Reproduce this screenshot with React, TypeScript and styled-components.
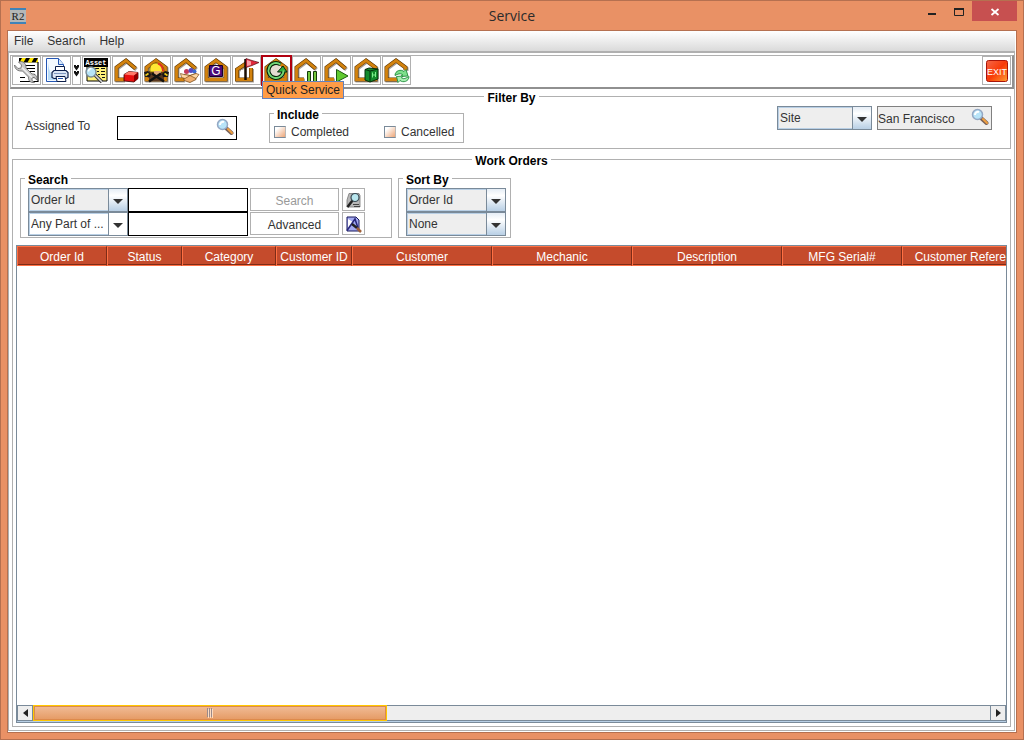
import React, { useId } from "react";
import styled, { createGlobalStyle, css } from "styled-components";

const color = {
  chrome: "#e99165",
  chromeEdge: "#b57050",
  line: "#b0b0b0",
  steel: "#7a8a99",
  ice: "#b8cfe5",
  text: "#333333",
  header: "#c54b2c",
  headerLight: "#ff7043",
  headerDark: "#7d2c18",
};

const GlobalStyle = createGlobalStyle`
  *, *::before, *::after { box-sizing: border-box; }
  body {
    margin: 0;
    font: 12px/14px "Liberation Sans", Arial, sans-serif;
    color: ${color.text};
  }
  button, input, select { font: inherit; color: inherit; margin: 0; border-radius: 0; }
  svg { display: block; }
`;

/* ---------- window frame ---------- */

const Window = styled.div`
  display: flex;
  flex-direction: column;
  min-height: 100vh;
  padding: 0 6px 6px;
  background: ${color.chrome};
  border: 1px solid ${color.chromeEdge};
`;

const TitleBar = styled.header`
  display: grid;
  grid-template-columns: 1fr auto 1fr;
  align-items: center;
  height: 29px;

  > svg { margin-left: 3px; }
`;

const Title = styled.h1`
  margin: 0;
  font: 400 14px/20px "Open Sans", sans-serif;
  color: #2b2b2b;
`;

const WindowButtons = styled.div`
  display: flex;
  justify-content: flex-end;
  align-self: start;
`;

const WindowButton = styled.button<{ $close?: boolean }>`
  display: grid;
  place-items: center;
  width: ${(p) => (p.$close ? 45 : 27)}px;
  height: 20px;
  padding: 2px 0 0;
  border: 0;
  background: ${(p) => (p.$close ? "#c75050" : "transparent")};
`;

const Frame = styled.div`
  display: flex;
  flex-direction: column;
  flex: 1;
  border: 1px solid ${color.chromeEdge};
  background: #fff;
  padding: 0 1px 1px 0;
`;

const MenuBar = styled.nav`
  display: flex;
  gap: 14px;
  height: 20px;
  padding: 0 6px;
  align-items: center;
  background: linear-gradient(#ffffff, #dadada);
`;

const MenuItem = styled.button`
  padding: 0;
  border: 0;
  background: none;
`;

const Panel = styled.main`
  display: flex;
  flex-direction: column;
  flex: 1;
  border: 1px solid ${color.line};
  border-top-width: 2px;
`;

/* ---------- toolbar ---------- */

const ToolBar = styled.div`
  display: flex;
  gap: 1px;
  margin: 2px 0 0 1px;
  padding: 0 1px 2px;
  border: 1px solid ${color.line};
  border-right: 2px solid #909090;
  border-bottom: 2px solid #909090;
`;

const ToolSlot = styled.div<{ $end?: boolean }>`
  position: relative;
  ${(p) => p.$end && css`margin-left: auto;`}
`;

const ToolButton = styled.button<{ $narrow?: boolean; $hot?: boolean }>`
  display: grid;
  place-items: center;
  width: ${(p) => (p.$narrow ? 9 : 29)}px;
  height: 29px;
  padding: 0;
  overflow: hidden;
  background: #fff;
  border: 1px solid ${color.line};
  ${(p) =>
    p.$hot &&
    css`
      border-color: #b00010;
      outline: 1px solid #b00010;
    `}
`;

const Tooltip = styled.div`
  position: absolute;
  z-index: 1;
  left: 0;
  top: 25px;
  padding: 1px 3px;
  white-space: nowrap;
  color: #222;
  background: #ff9c46;
  border: 1px solid #6382bf;
`;

/* ---------- group boxes ---------- */

const GroupFrame = styled.section<{ $width?: number; $fill?: boolean }>`
  display: flex;
  flex-direction: column;
  min-width: 0;
  border: 1px solid ${color.line};
  ${(p) => p.$width && css`width: ${p.$width}px;`}
  ${(p) => p.$fill && css`flex: 1;`}
`;

const GroupTitle = styled.h2<{ $center?: boolean }>`
  align-self: ${(p) => (p.$center ? "center" : "flex-start")};
  margin: -6px 4px 0;
  padding: 0 3px;
  font-size: 12px;
  line-height: 14px;
  font-weight: bold;
  color: #000;
  background: #fff;
`;

const Sections = styled.div`
  display: flex;
  flex-direction: column;
  flex: 1;
  gap: 10px;
  padding: 7px 3px 3px;
`;

const FilterRow = styled.div`
  display: flex;
  align-items: flex-start;
  height: 43px;
  padding: 0 18px 0 12px;
`;

const FilterField = styled.div`
  display: flex;
  align-items: center;
  padding-top: 11px;
  margin-right: 32px;
`;

const IncludeFilter = styled.div`
  padding-top: 8px;
`;

const FieldLabel = styled.label`
  width: 92px;
  padding-bottom: 4px;
`;

const SiteFilter = styled.div`
  display: flex;
  gap: 5px;
  margin-left: auto;
  padding-top: 1px;
`;

const LookupBox = styled.div<{ $filled?: boolean; $width: number }>`
  display: flex;
  width: ${(p) => p.$width}px;
  height: 24px;
  border: 1px solid ${(p) => (p.$filled ? "#808080" : "#000")};
  background: ${(p) => (p.$filled ? "#eeeeee" : "#fff")};
`;

const LookupInput = styled.input`
  flex: 1;
  min-width: 0;
  padding: 1px 0 0;
  border: 0;
  outline: 0;
  background: transparent;
`;

const LookupButton = styled.button`
  width: 20px;
  padding: 0 0 3px;
  border: 0;
  background: none;
`;

const Checks = styled.div`
  display: grid;
  grid-template-columns: 110px auto;
  align-items: center;
  height: 20px;
  padding-left: 4px;
`;

const CheckLabel = styled.label`
  display: flex;
  align-items: center;
  gap: 5px;
`;

const CheckBox = styled.input`
  appearance: none;
  width: 12px;
  height: 12px;
  border: 1px solid ${color.steel};
  border-right-color: #b9b9b9;
  background: linear-gradient(135deg, #ffffff 20%, #eda577);
`;

const Groups = styled.div`
  display: flex;
  gap: 6px;
  padding: 10px 7px 7px;
`;

const SearchGrid = styled.div`
  display: grid;
  grid-template-columns: 100px 122px 92px 23px;
  grid-auto-rows: 24px;
  padding: 1px 7px;
`;

const SortStack = styled.div`
  display: grid;
  grid-auto-rows: 24px;
  padding: 1px 7px;
`;

const SearchInput = styled.input`
  width: 120px;
  height: 24px;
  padding: 0 3px;
  border: 1px solid #000;
  background: #fff;
`;

const PushButton = styled.button<{ $icon?: boolean }>`
  display: grid;
  place-items: center;
  width: ${(p) => (p.$icon ? 23 : 89)}px;
  height: 23px;
  padding: 2px 0 0;
  background: #fff;
  border: 1px solid ${color.line};
  &:disabled { color: #999; }
`;

/* ---------- drop-down ---------- */

const ComboBox = styled.div<{ $plain?: boolean; $width: number }>`
  display: grid;
  grid-template-columns: 1fr 19px;
  width: ${(p) => p.$width}px;
  height: 24px;
  border: 1px solid ${color.steel};
  background: ${(p) => (p.$plain ? "#fff" : "#eeeeee")};
  box-shadow: inset 0 0 0 1px ${color.ice};
`;

const ComboSelect = styled.select`
  grid-area: 1 / 1 / 2 / 3;
  min-width: 0;
  padding: 0 20px 1px 2px;
  border: 0;
  appearance: none;
  background: transparent;
`;

const ComboArrow = styled.span<{ $plain?: boolean }>`
  grid-area: 1 / 2 / 2 / 3;
  display: grid;
  place-items: center;
  padding-top: 2px;
  pointer-events: none;
  border-left: 1px solid ${color.steel};
  background: ${(p) =>
    p.$plain ? "#fff" : `linear-gradient(#e6eef6, #ffffff 30%, ${color.ice})`};
`;

/* ---------- table ---------- */

const ScrollPane = styled.div`
  display: flex;
  flex-direction: column;
  flex: 1;
  margin: 0 3px 3px;
  border: 1px solid ${color.steel};
`;

const Viewport = styled.div`
  flex: 1;
  overflow: hidden;
  width: 0;
  min-width: 100%;
`;

const Table = styled.table`
  width: 1021px;
  table-layout: fixed;
  border-collapse: separate;
  border-spacing: 0;
`;

const HeaderCell = styled.th<{ $width: number }>`
  width: ${(p) => p.$width}px;
  height: 20px;
  padding: 2px 0 0;
  font-weight: normal;
  white-space: nowrap;
  color: #fff;
  background: ${color.header};
  border: 1px solid ${color.headerLight};
  border-right-color: ${color.headerDark};
  box-shadow: inset 0 -1px 0 ${color.headerDark};
`;

const ScrollBar = styled.div`
  display: flex;
  height: 17px;
  border-bottom: 1px solid ${color.ice};
`;

const ScrollArrow = styled.button`
  display: grid;
  place-items: center;
  width: 16px;
  padding: 0;
  background: #eeeeee;
  border: 1px solid ${color.steel};
`;

const ScrollTrack = styled.div`
  flex: 1;
  background: #eeeeee;
  border: 1px solid ${color.steel};
  border-width: 1px 0;
`;

const ScrollThumb = styled.div`
  display: grid;
  place-items: center;
  width: 37%;
  height: 16px;
  margin: -1px 0;
  border: 1px solid #ffc800;
  background: linear-gradient(#f1bd98, #e59a63);
  box-shadow: inset 0 0 0 1px #dd8a4c;
`;

/* ---------- icons ---------- */

const Icon = ({ children, size = 27, height }: { children: React.ReactNode; size?: number; height?: number }) => (
  <svg width={size} height={height ?? size} viewBox={`0 0 ${size} ${height ?? size}`} aria-hidden="true">
    {children}
  </svg>
);

const OPEN_HOUSE = "M22.5 11.500L13 3.500L3.500 10.500V22.500H11";
const FULL_HOUSE = "M13 3.500L3.500 10.500V22.500H22.500V10.500Z";

const House = ({ d = OPEN_HOUSE }: { d?: string }) => (
  <>
    <path d={d} transform="translate(1 1)" fill="none" stroke="#a8a098" strokeWidth="4" />
    <path d={d} fill="none" stroke="#5c3400" strokeWidth="4" />
    <path d={d} fill="none" stroke="#d2820e" strokeWidth="2.800" />
  </>
);

const WorkOrderIcon = () => (
  <Icon>
    <path d="M6 5h19v19H6z" fill="#fff" />
    <path d="M6 1h19v4.500H6z" fill="#000" />
    <path d="M9 1h4l-2.500 4.500H6.500zM17 1h4l-2.500 4.500h-4zM25 1v4.500h-2.500z" fill="#ffe600" />
    <path d="M25 5v19.500H7M9 8.500h13M12 11.500h10M13 14.500h9M16 17.500h6M7 20.500h5M20 20.500h2" fill="none" stroke="#000" strokeWidth="1.200" />
    <path d="M1.500 8l3.500 3.500 3-.5.5-3L5.500 5c4-1.500 8 1 7.500 6l6 6c3-.5 5.500 2 5 6l-3-2.500-2 .5v2.500l2.500 2c-4 .5-6.500-2-6-5.500l-6-6c-4.500.5-8-2-8-6z" fill="#c6c6c6" stroke="#666" strokeWidth=".8" />
    <path d="M9 10.500l10 10" stroke="#eeeeee" strokeWidth="1.500" />
  </Icon>
);

const PrintIcon = () => (
  <Icon>
    <path d="M3.500 1.500h12l5 6v17h-17z" fill="#f4faff" stroke="#2456b4" />
    <path d="M15.500 1.500v6h5" fill="#d6e8fa" stroke="#2456b4" />
    <path d="M5 3v20h10C8 20 5 12 5 3z" fill="#b9dcf7" />
    <path d="M12.500 9.500h9v5h-9z" fill="#fff" stroke="#0c1e4a" />
    <path d="M11 13.500h12l2 2v5l-2 1H11l-2-1v-5z" fill="#dce6f4" stroke="#0c1e4a" strokeWidth="1.200" />
    <path d="M11 16.500h12" stroke="#8098c0" />
    <path d="M13 19.500h9l1 5h-9z" fill="#fff" stroke="#0c1e4a" />
    <path d="M15 21.500h5" stroke="#2456b4" />
  </Icon>
);

const MoreIcon = () => (
  <Icon size={7} height={27}>
    <path d="M1 8h5v2L3.500 13.500 1 10zM1 14h5v2L3.500 19.500 1 16z" fill="#111" />
    <path d="M3 8.500h1M3 14.500h1" stroke="#fff" />
  </Icon>
);

const AssetIcon = () => (
  <Icon>
    <path d="M4 9h20v15H4z" fill="#fff27a" stroke="#000" />
    <path d="M12 11.500h4M18 11.500h4M14 14.500h2M18 14.500h4M15 17.500h2M18 17.500h4M19 20.500h3" stroke="#111" strokeWidth="1.200" />
    <path d="M1 1h24v9H1z" fill="#000" />
    <text x="13" y="8" textAnchor="middle" fontFamily="Liberation Mono, monospace" fontSize="7" fontWeight="bold" fill="#fff">Asset</text>
    <path d="M12 18l7 7" stroke="#333" strokeWidth="3.500" />
    <path d="M12 18l7 7" stroke="#d9d9d9" strokeWidth="1.600" />
    <circle cx="8" cy="15" r="5" fill="#b7e4f7" stroke="#7a8a94" strokeWidth="1.400" />
    <path d="M5.500 14.500a3 3 0 0 1 3-3" fill="none" stroke="#fff" strokeWidth="1.500" />
  </Icon>
);

const HouseBoxIcon = () => (
  <Icon>
    <House />
    <path d="M11 17.500l5-3 9 1v6l-4 3.500-10-1z" fill="#e81010" stroke="#300" strokeWidth=".8" />
    <path d="M11 17.500l5-3 9 1-4 3z" fill="#ff7a6a" />
    <path d="M21 18.500l4-3v6l-4 3.500z" fill="#8c0000" />
  </Icon>
);

const HouseWorkerIcon = () => (
  <Icon>
    <House d={FULL_HOUSE} />
    <path d="M6 14h15v10H6z" fill="#5a3820" />
    <path d="M7 15c-1-6 2-9 6-9s8 3 8 9z" fill="#ffe733" stroke="#6a5200" strokeWidth=".8" />
    <path d="M15 6.500c3 1 5 4 5 8" fill="none" stroke="#e03020" strokeWidth="2" />
    <path d="M11 14h7v4h-7z" fill="#e0a878" />
    <path d="M6 24.500l12-8M21 24.500l-12-8" stroke="#111" strokeWidth="2.500" />
    <path d="M1 15l4-1 3 3-1 3H2zM26 15l-4-1-3 3 1 3h5z" fill="#151515" />
    <path d="M2.500 18.500l3-2M24.500 18.500l-3-2" stroke="#e8c820" strokeWidth="1.600" />
  </Icon>
);

const HousePartsIcon = () => (
  <Icon>
    <House />
    <circle cx="13.500" cy="14.500" r="2.500" fill="#c43a5a" />
    <circle cx="18" cy="13.500" r="2.500" fill="#5a4ac0" />
    <circle cx="21.500" cy="14.500" r="2" fill="#3a6ad0" />
    <path d="M11 17.500l6 1 6-2v6l-6 3-6-2z" fill="#f0b070" stroke="#7a4a18" strokeWidth=".8" />
    <path d="M11 17.500l-3.500-1 1 4 3.500 1 5-3zM23 16.500l3 1-3 4-6-3z" fill="#ffd8a4" stroke="#7a4a18" strokeWidth=".7" />
  </Icon>
);

const HouseGIcon = () => (
  <Icon>
    <House d={FULL_HOUSE} />
    <path d="M6.500 8.500h13v11h-13z" fill="#4b0a78" stroke="#16002a" />
    <text x="13" y="18" textAnchor="middle" fontFamily="Liberation Sans, sans-serif" fontSize="12" fill="#fff">G</text>
  </Icon>
);

const HouseFlagIcon = () => (
  <Icon>
    <House d="M13 6.500L4 12.500V22.500H18V11" />
    <path d="M8 13h3v7H8z" fill="#fff" />
    <path d="M12.500 2v21" stroke="#1a0d00" strokeWidth="2.500" />
    <path d="M13 1.500l6 2 7 2-7 3-6 2z" fill="#e22a3c" stroke="#501018" strokeWidth=".7" />
    <path d="M14 3l4 1.500v3.500l-4 1z" fill="#f9a0a8" />
  </Icon>
);

const HouseRefreshIcon = () => (
  <Icon>
    <House d={FULL_HOUSE} />
    <circle cx="13" cy="13.500" r="6" fill="#e4ddd2" />
    <path d="M17.500 7.500a7.500 7.500 0 1 0 3 6" fill="none" stroke="#06270a" strokeWidth="4" />
    <path d="M14.500 15h9.500l-4-6z" fill="#2fae3c" stroke="#06270a" />
    <path d="M17.500 7.500a7.500 7.500 0 1 0 3 6" fill="none" stroke="#72d878" strokeWidth="1.800" />
  </Icon>
);

const HousePauseIcon = () => (
  <Icon>
    <House />
    <path d="M14.500 14.500h3v10h-3zM20.500 14.500h3v10h-3z" fill="#74c83c" stroke="#143a08" />
  </Icon>
);

const HousePlayIcon = () => (
  <Icon>
    <House />
    <path d="M13.500 12.500L25 19l-11.500 6z" fill="#5fc92f" stroke="#1d5a10" />
  </Icon>
);

const HouseBinIcon = () => (
  <Icon>
    <House d={FULL_HOUSE} />
    <path d="M12 12.500l4-1.500 9 1v10l-8 3-5-2z" fill="#138a2c" stroke="#04300c" />
    <path d="M12 12.500l5 1.500 8-2M17 14v11" fill="none" stroke="#04300c" />
    <path d="M19.500 15.500v5M22.500 15v5M19.500 18h3" stroke="#7df08c" />
  </Icon>
);

const HouseSyncIcon = () => (
  <Icon>
    <House d="M22.500 13V10.500L13 3.500L3.500 10.500V22.500H14" />
    <path d="M12 18.500c0-5 6-6.500 9-4l2-2 2 6.500-7 .5 1.500-2c-2.500-1.500-4.500-.5-7.500 1z" fill="#7ee08c" stroke="#1f8a3a" strokeWidth=".9" />
    <path d="M26 19.500c0 5-6 6.500-9 4l-2 2-1.500-6 6.500-.5-1.500 2c2.500 1.500 4.500 0 7.500-1.500z" fill="#a6f0b0" stroke="#1f8a3a" strokeWidth=".9" />
  </Icon>
);

const ExitIcon = () => (
  <Icon>
    <defs>
      <linearGradient id="exit" x1="0" y1="0" x2="1" y2="1">
        <stop offset="0" stopColor="#f4684a" />
        <stop offset=".5" stopColor="#f83a08" />
        <stop offset="1" stopColor="#ffa030" />
      </linearGradient>
    </defs>
    <rect x="3.500" y="3.500" width="21" height="21" rx="2" fill="url(#exit)" stroke="#a81408" />
    <text x="14" y="18" textAnchor="middle" fontFamily="Liberation Sans, sans-serif" fontSize="9" fill="#fff">EXIT</text>
  </Icon>
);

const LensIcon = () => (
  <Icon size={18}>
    <path d="M10 10l5.500 5" stroke="#7a6258" strokeWidth="4" strokeLinecap="round" />
    <path d="M12 11l4 4" stroke="#f0a040" strokeWidth="2" strokeLinecap="round" />
    <circle cx="6.500" cy="6.500" r="5" fill="#b8e4f8" stroke="#94a8c4" strokeWidth="1.500" />
    <path d="M4 7a3 3 0 0 1 4-3" fill="none" stroke="#fff" strokeWidth="2" />
  </Icon>
);

const FindPageIcon = () => (
  <Icon size={17}>
    <path d="M4 1.500h10l1 2V15H2V8z" fill="#b8b8b8" stroke="#777" strokeWidth=".8" />
    <path d="M8 12.500h6M9 14.500h6" stroke="#444" />
    <path d="M7.500 8.500L2.500 15" stroke="#222" strokeWidth="2.500" />
    <circle cx="10" cy="5.500" r="4" fill="#b8e6ee" stroke="#3a4a54" strokeWidth="1.200" />
  </Icon>
);

const FindAdvancedIcon = () => (
  <Icon size={17}>
    <path d="M2 1h9l3 3v11H2z" fill="#a4aaf0" stroke="#16165a" />
    <path d="M3 3l5 3-5 7z" fill="#fff" />
    <path d="M2 14.500L10 3l3 9" fill="none" stroke="#26267a" strokeWidth="1.500" />
    <path d="M7 8l5 4" stroke="#222" strokeWidth="2.500" />
    <path d="M12 12l4 4" stroke="#a06038" strokeWidth="2.500" />
  </Icon>
);

const AppIcon = () => (
  <Icon size={16}>
    <path d="M0 0h16v16H0z" fill="#b4b8b8" />
    <path d="M0 0h16v2H0zM0 14h16v2H0z" fill="#3f83b8" />
    <text x="8" y="12" textAnchor="middle" fontFamily="Liberation Serif, serif" fontSize="11" fill="#222">R2</text>
  </Icon>
);

/* ---------- composed controls ---------- */

type GroupProps = { title: string; center?: boolean; width?: number; fill?: boolean; children: React.ReactNode };

const Group = ({ title, center, width, fill, children }: GroupProps) => {
  const id = useId();
  return (
    <GroupFrame role="group" aria-labelledby={id} $width={width} $fill={fill}>
      <GroupTitle id={id} $center={center}>
        {title}
      </GroupTitle>
      {children}
    </GroupFrame>
  );
};

const Combo = ({ label, value, width = 100, plain }: { label: string; value: string; width?: number; plain?: boolean }) => (
  <ComboBox $width={width} $plain={plain}>
    <ComboSelect aria-label={label} defaultValue={value}>
      <option>{value}</option>
    </ComboSelect>
    <ComboArrow $plain={plain}>
      <Icon size={10} height={5}>
        <path d="M0 0h10L5 5z" fill="#333" />
      </Icon>
    </ComboArrow>
  </ComboBox>
);

const Lookup = ({ id, label, value, width, filled }: { id: string; label?: string; value?: string; width: number; filled?: boolean }) => (
  <LookupBox $width={width} $filled={filled}>
    <LookupInput id={id} aria-label={label} defaultValue={value} />
    <LookupButton aria-label="Look up">
      <LensIcon />
    </LookupButton>
  </LookupBox>
);

const tools = [
  { name: "Work Order", icon: <WorkOrderIcon /> },
  { name: "Print", icon: <PrintIcon /> },
  { name: "Print Options", icon: <MoreIcon />, narrow: true },
  { name: "Asset", icon: <AssetIcon /> },
  { name: "Parts Order", icon: <HouseBoxIcon /> },
  { name: "Mechanic", icon: <HouseWorkerIcon /> },
  { name: "Parts", icon: <HousePartsIcon /> },
  { name: "General", icon: <HouseGIcon /> },
  { name: "Flag", icon: <HouseFlagIcon /> },
  { name: "Quick Service", icon: <HouseRefreshIcon />, hot: true },
  { name: "Pause", icon: <HousePauseIcon /> },
  { name: "Resume", icon: <HousePlayIcon /> },
  { name: "Archive", icon: <HouseBinIcon /> },
  { name: "Refresh", icon: <HouseSyncIcon /> },
];

const columns: [string, number][] = [
  ["Order Id", 90],
  ["Status", 75],
  ["Category", 94],
  ["Customer ID", 76],
  ["Customer", 140],
  ["Mechanic", 140],
  ["Description", 150],
  ["MFG Serial#", 120],
  ["Customer Reference", 136],
];

export default function App() {
  return (
    <>
      <GlobalStyle />
      <Window>
        <TitleBar>
          <AppIcon />
          <Title>Service</Title>
          <WindowButtons>
            <WindowButton aria-label="Minimize">
              <Icon size={12}>
                <path d="M2 7h8v2H2z" fill="#222" />
              </Icon>
            </WindowButton>
            <WindowButton aria-label="Maximize">
              <Icon size={12}>
                <path d="M1.500 2v7.500h9V2" fill="none" stroke="#222" />
                <path d="M1 2h10v2H1z" fill="#222" />
              </Icon>
            </WindowButton>
            <WindowButton aria-label="Close" $close>
              <Icon size={10}>
                <path d="M1.500 2l7 6M8.500 2l-7 6" stroke="#fff" strokeWidth="1.800" />
              </Icon>
            </WindowButton>
          </WindowButtons>
        </TitleBar>
        <Frame>
          <MenuBar>
            <MenuItem>File</MenuItem>
            <MenuItem>Search</MenuItem>
            <MenuItem>Help</MenuItem>
          </MenuBar>
          <Panel>
            <ToolBar>
              {tools.map((t) => (
                <ToolSlot key={t.name}>
                  <ToolButton aria-label={t.name} $narrow={t.narrow} $hot={t.hot}>
                    {t.icon}
                  </ToolButton>
                  {t.hot && <Tooltip role="tooltip">{t.name}</Tooltip>}
                </ToolSlot>
              ))}
              <ToolSlot $end>
                <ToolButton aria-label="Exit">
                  <ExitIcon />
                </ToolButton>
              </ToolSlot>
            </ToolBar>
            <Sections>
              <Group title="Filter By" center>
                <FilterRow>
                  <FilterField>
                    <FieldLabel htmlFor="assigned">Assigned To</FieldLabel>
                    <Lookup id="assigned" width={120} />
                  </FilterField>
                  <IncludeFilter>
                    <Group title="Include" width={195}>
                      <Checks>
                        <CheckLabel>
                          <CheckBox type="checkbox" />
                          Completed
                        </CheckLabel>
                        <CheckLabel>
                          <CheckBox type="checkbox" />
                          Cancelled
                        </CheckLabel>
                      </Checks>
                    </Group>
                  </IncludeFilter>
                  <SiteFilter>
                    <Combo label="Location type" value="Site" width={95} />
                    <Lookup id="site" label="Site" value="San Francisco" width={115} filled />
                  </SiteFilter>
                </FilterRow>
              </Group>
              <Group title="Work Orders" center fill>
                <Groups>
                  <Group title="Search" width={372}>
                    <SearchGrid>
                      <Combo label="Search field" value="Order Id" />
                      <SearchInput aria-label="Search text" />
                      <PushButton disabled>Search</PushButton>
                      <PushButton $icon aria-label="Find">
                        <FindPageIcon />
                      </PushButton>
                      <Combo label="Match" value="Any Part of ..." plain />
                      <SearchInput aria-label="Match text" />
                      <PushButton>Advanced</PushButton>
                      <PushButton $icon aria-label="Advanced find">
                        <FindAdvancedIcon />
                      </PushButton>
                    </SearchGrid>
                  </Group>
                  <Group title="Sort By" width={113}>
                    <SortStack>
                      <Combo label="Sort first by" value="Order Id" />
                      <Combo label="Sort then by" value="None" />
                    </SortStack>
                  </Group>
                </Groups>
                <ScrollPane>
                  <Viewport>
                    <Table>
                      <thead>
                        <tr>
                          {columns.map(([name, width]) => (
                            <HeaderCell key={name} $width={width} scope="col">
                              {name}
                            </HeaderCell>
                          ))}
                        </tr>
                      </thead>
                      <tbody />
                    </Table>
                  </Viewport>
                  <ScrollBar>
                    <ScrollArrow aria-label="Scroll left">
                      <Icon size={5} height={8}>
                        <path d="M5 0v8L0 4z" fill="#222" />
                      </Icon>
                    </ScrollArrow>
                    <ScrollTrack>
                      <ScrollThumb>
                        <Icon size={6} height={10}>
                          <path d="M.5 0v9M2.500 0v9M4.500 0v9" stroke="#9a8a8a" />
                          <path d="M1.500 1v9M3.500 1v9M5.500 1v9" stroke="#ffdcc0" />
                        </Icon>
                      </ScrollThumb>
                    </ScrollTrack>
                    <ScrollArrow aria-label="Scroll right">
                      <Icon size={5} height={8}>
                        <path d="M0 0v8l5-4z" fill="#222" />
                      </Icon>
                    </ScrollArrow>
                  </ScrollBar>
                </ScrollPane>
              </Group>
            </Sections>
          </Panel>
        </Frame>
      </Window>
    </>
  );
}
